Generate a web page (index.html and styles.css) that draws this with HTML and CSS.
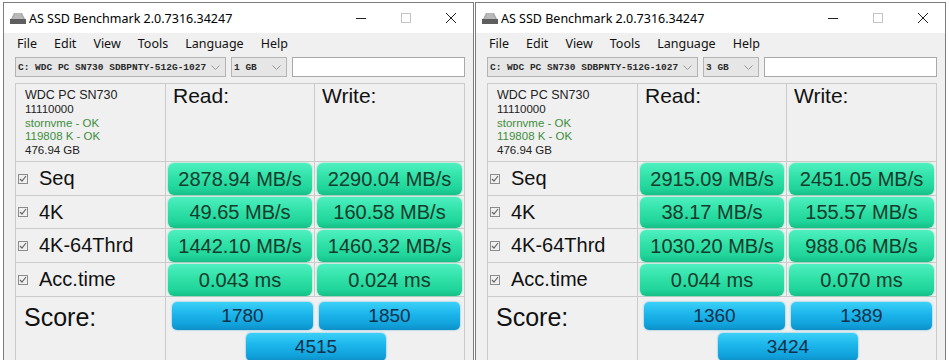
FILE: index.html
```html
<!DOCTYPE html>
<html lang="en">
    <head>
        <meta charset="UTF-8">
        <meta name="viewport" content="width=device-width, initial-scale=1.0">
        <title>AS SSD Benchmark</title>
        <link rel="stylesheet" href="styles.css">
    </head>
    <body>
        <div class="window">
            <div class="titlebar">
                <svg class="app-icon" width="16" height="11" viewBox="0 0 16 11"><path d="M4 0h8l3 6H1z" fill="#a8a8a8"/><path d="M5 1h6M4 3h8M3 5h10" stroke="#c8c8c8" stroke-width="1"/><rect x="0" y="6" width="16" height="5" fill="#5e5e5e"/></svg>
                <span class="title">AS SSD Benchmark 2.0.7316.34247</span>
                <div class="controls">
                    <span><svg width="10" height="10"><path d="M0 5.5h10" stroke="#222" stroke-width="1"/></svg></span>
                    <span><svg width="10" height="10"><rect x="0.5" y="0.5" width="9" height="9" fill="none" stroke="#c4c4c4"/></svg></span>
                    <span><svg width="10" height="10"><path d="M0 0L10 10M10 0L0 10" stroke="#222" stroke-width="1"/></svg></span>
                </div>
            </div>
            <ul class="menu">
                <li>File</li>
                <li>Edit</li>
                <li>View</li>
                <li>Tools</li>
                <li>Language</li>
                <li>Help</li>
            </ul>
            <div class="toolbar">
                <div class="combo drive">C: WDC PC SN730 SDBPNTY-512G-1027<svg width="9" height="5"><path d="M0.5 0.5L4.5 4.5L8.5 0.5" fill="none" stroke="#999"/></svg></div>
                <div class="combo size">1 GB<svg width="9" height="5"><path d="M0.5 0.5L4.5 4.5L8.5 0.5" fill="none" stroke="#999"/></svg></div>
                <div class="field"></div>
            </div>
            <div class="bench">
                <div class="info">
                    <p class="model">WDC PC SN730</p>
                    <p>11110000</p>
                    <p class="ok">stornvme - OK</p>
                    <p class="ok">119808 K - OK</p>
                    <p>476.94 GB</p>
                </div>
                <div class="head">Read:</div>
                <div class="head">Write:</div>

                <div class="label"><span class="check"></span>Seq</div>
                <div class="cell"><span class="val">2878.94 MB/s</span></div>
                <div class="cell"><span class="val">2290.04 MB/s</span></div>

                <div class="label"><span class="check"></span>4K</div>
                <div class="cell"><span class="val">49.65 MB/s</span></div>
                <div class="cell"><span class="val">160.58 MB/s</span></div>

                <div class="label"><span class="check"></span>4K-64Thrd</div>
                <div class="cell"><span class="val">1442.10 MB/s</span></div>
                <div class="cell"><span class="val">1460.32 MB/s</span></div>

                <div class="label"><span class="check"></span>Acc.time</div>
                <div class="cell"><span class="val">0.043 ms</span></div>
                <div class="cell"><span class="val">0.024 ms</span></div>

                <div class="score-label">Score:</div>
                <div class="scores">
                    <span class="score">1780</span>
                    <span class="score">1850</span>
                    <span class="score total">4515</span>
                </div>
            </div>
        </div>

        <div class="window">
            <div class="titlebar">
                <svg class="app-icon" width="16" height="11" viewBox="0 0 16 11"><path d="M4 0h8l3 6H1z" fill="#a8a8a8"/><path d="M5 1h6M4 3h8M3 5h10" stroke="#c8c8c8" stroke-width="1"/><rect x="0" y="6" width="16" height="5" fill="#5e5e5e"/></svg>
                <span class="title">AS SSD Benchmark 2.0.7316.34247</span>
                <div class="controls">
                    <span><svg width="10" height="10"><path d="M0 5.5h10" stroke="#222" stroke-width="1"/></svg></span>
                    <span><svg width="10" height="10"><rect x="0.5" y="0.5" width="9" height="9" fill="none" stroke="#c4c4c4"/></svg></span>
                    <span><svg width="10" height="10"><path d="M0 0L10 10M10 0L0 10" stroke="#222" stroke-width="1"/></svg></span>
                </div>
            </div>
            <ul class="menu">
                <li>File</li>
                <li>Edit</li>
                <li>View</li>
                <li>Tools</li>
                <li>Language</li>
                <li>Help</li>
            </ul>
            <div class="toolbar">
                <div class="combo drive">C: WDC PC SN730 SDBPNTY-512G-1027<svg width="9" height="5"><path d="M0.5 0.5L4.5 4.5L8.5 0.5" fill="none" stroke="#999"/></svg></div>
                <div class="combo size">3 GB<svg width="9" height="5"><path d="M0.5 0.5L4.5 4.5L8.5 0.5" fill="none" stroke="#999"/></svg></div>
                <div class="field"></div>
            </div>
            <div class="bench">
                <div class="info">
                    <p class="model">WDC PC SN730</p>
                    <p>11110000</p>
                    <p class="ok">stornvme - OK</p>
                    <p class="ok">119808 K - OK</p>
                    <p>476.94 GB</p>
                </div>
                <div class="head">Read:</div>
                <div class="head">Write:</div>

                <div class="label"><span class="check"></span>Seq</div>
                <div class="cell"><span class="val">2915.09 MB/s</span></div>
                <div class="cell"><span class="val">2451.05 MB/s</span></div>

                <div class="label"><span class="check"></span>4K</div>
                <div class="cell"><span class="val">38.17 MB/s</span></div>
                <div class="cell"><span class="val">155.57 MB/s</span></div>

                <div class="label"><span class="check"></span>4K-64Thrd</div>
                <div class="cell"><span class="val">1030.20 MB/s</span></div>
                <div class="cell"><span class="val">988.06 MB/s</span></div>

                <div class="label"><span class="check"></span>Acc.time</div>
                <div class="cell"><span class="val">0.044 ms</span></div>
                <div class="cell"><span class="val">0.070 ms</span></div>

                <div class="score-label">Score:</div>
                <div class="scores">
                    <span class="score">1360</span>
                    <span class="score">1389</span>
                    <span class="score total">3424</span>
                </div>
            </div>
        </div>
    </body>
</html>
```

FILE: styles.css
```css
* {
    box-sizing: border-box;
    margin: 0;
    padding: 0;
}

html, body {
    height: 360px;
    overflow: hidden;
}

body {
    background-color: #fff;
    display: flex;
    gap: 1px;
    padding: 2px 0 0 3px;
    font-family: "Liberation Sans", Arial, sans-serif;
    color: #111;
}

.window {
    width: 471px;
    height: 400px;
    flex: none;
    background-color: #f0f0f0;
    border: 1px solid #7d7d7d;
    border-bottom: 0;
}

.titlebar {
    height: 30px;
    background-color: #fff;
    display: flex;
    align-items: center;
}

.app-icon {
    margin-left: 6px;
}

.title {
    margin-left: 3px;
    font-family: "Noto Sans", sans-serif;
    font-size: 12.5px;
    color: #000;
}

.controls {
    margin-left: auto;
    display: flex;
}

.controls span {
    width: 45px;
    height: 30px;
    display: flex;
    align-items: center;
    justify-content: center;
}

.menu {
    list-style: none;
    display: flex;
    gap: 17px;
    height: 21px;
    align-items: center;
    padding-left: 13px;
    font-family: "Noto Sans", sans-serif;
    font-size: 12.5px;
    color: #111;
}

.toolbar {
    display: flex;
    gap: 5px;
    margin-top: 3px;
    padding-left: 11px;
    height: 20px;
}

.combo {
    display: flex;
    align-items: center;
    justify-content: space-between;
    padding: 0 5px 0 2px;
    background-color: #e6e6e6;
    border: 1px solid #b4b4b4;
    font-family: "Liberation Mono", monospace;
    font-size: 9.5px;
    font-weight: bold;
    color: #2a2a2a;
}

.drive {
    width: 211px;
}

.size {
    width: 56px;
}

.field {
    width: 173px;
    background-color: #fff;
    border: 1px solid #a9a9a9;
}

.bench {
    display: grid;
    grid-template-columns: 149px 148px 149px;
    grid-template-rows: 77px 33px 32px 33px 33px 80px;
    gap: 1px;
    width: 450px;
    margin: 6px 0 0 11px;
    background-color: #cbcbcb;
    border: 1px solid #cbcbcb;
}

.bench > div {
    background-color: #f0f0f0;
}

.info {
    padding: 4px 0 0 9px;
    font-size: 11.5px;
    line-height: 13.5px;
    color: #222;
}

.info .model {
    font-size: 12.5px;
    line-height: 15px;
}

.info .ok {
    color: #3e8e3e;
}

.head {
    padding: 1px 0 0 7px;
    font-size: 21px;
    line-height: 1;
}

.label {
    display: flex;
    align-items: center;
    padding-left: 2px;
    font-size: 20px;
}

.check {
    width: 10px;
    height: 10px;
    margin-right: 11px;
    border: 1px solid #8c8c8c;
    background: no-repeat center / 8px 8px url("data:image/svg+xml,%3Csvg xmlns='http://www.w3.org/2000/svg' viewBox='0 0 8 8'%3E%3Cpath d='M1 4l2 2 4-5' fill='none' stroke='%23666' stroke-width='1.2'/%3E%3C/svg%3E");
}

.cell {
    padding: 1px 2px 0 2px;
}

.val {
    height: 100%;
    display: flex;
    align-items: center;
    justify-content: center;
    border-radius: 6px;
    background: linear-gradient(#4ef0c0, #30e1a7 45%, #20d49a 80%, #16bf86);
    box-shadow: 0 0 2px rgba(30, 220, 150, 0.7);
    font-size: 20px;
    color: #153b2d;
}

.score-label {
    padding: 6px 0 0 8px;
    font-size: 25px;
}

.scores {
    grid-column: span 2;
    display: grid;
    grid-template-columns: 141px 141px;
    grid-template-rows: 28px 28px;
    gap: 3px 6px;
    padding: 5px 0 0 6px;
}

.score {
    display: flex;
    align-items: center;
    justify-content: center;
    border-radius: 5px;
    background: linear-gradient(#3ad0f8, #1bb4ea 45%, #11a2dc 80%, #0d8fc6);
    box-shadow: 0 0 2px rgba(20, 160, 220, 0.7);
    font-size: 19px;
    color: #12304a;
}

.total {
    grid-column: span 2;
    justify-self: center;
    width: 140px;
}
```
